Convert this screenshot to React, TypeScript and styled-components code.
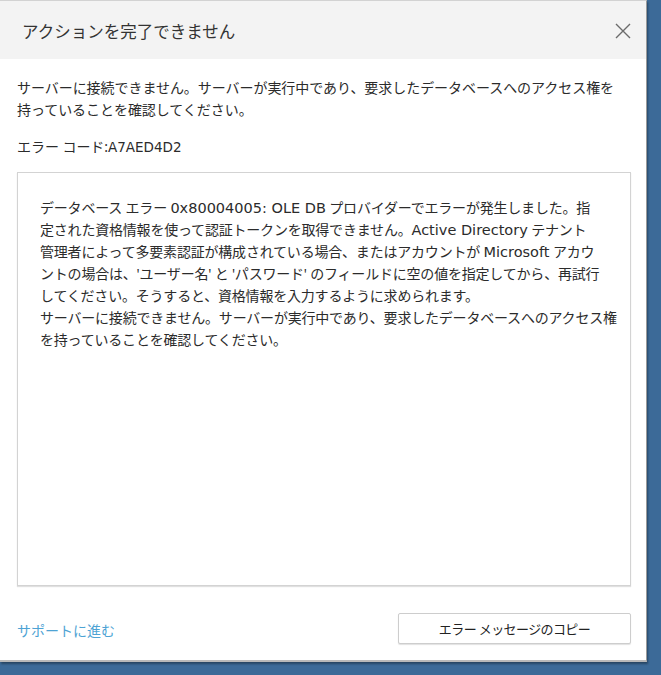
import styled, { createGlobalStyle } from 'styled-components';

// ダイアログの色
const blueBg = '#3c6a98';
const textDark = '#2b2b2b';

const GlobalStyle = createGlobalStyle`
  * { box-sizing: border-box; }
  html, body { margin: 0; padding: 0; }
  body {
    background: ${blueBg};
    font-family: "Noto Sans", "Noto Sans CJK JP", sans-serif;
    width: 661px;
    height: 675px;
    overflow: hidden;
  }
`;

const Dialog = styled.div`
  width: 647px;
  height: 662px;
  background: #fff;
  border-top: 1px solid #d2d2d2;
  border-right: 1px solid #9a9a9a;
  border-bottom: 2px solid #b9b9b9;
  box-shadow: 1px 2px 2px rgba(0, 0, 0, 0.35);
  display: flex;
  flex-direction: column;
`;

const Header = styled.header`
  height: 58px;
  background: #f3f3f3;
  display: flex;
  align-items: center;
  justify-content: space-between;
  padding: 0 15px 0 22px;
`;

const Title = styled.h1`
  margin: 0;
  font-size: 16.5px;
  font-weight: 400;
  color: #333;
  margin-top: 2px;
`;

const CloseButton = styled.button`
  width: 16px;
  height: 16px;
  padding: 0;
  border: none;
  background: none;
  display: flex;
  cursor: pointer;
  margin-top: 1px;
`;

const Body = styled.main`
  flex: 1;
  display: flex;
  flex-direction: column;
  padding: 18px 15px 16px 17px;
`;

const Message = styled.p`
  margin: 0;
  font-size: 14px;
  line-height: 22px;
  letter-spacing: -0.05px;
  color: ${textDark};
  white-space: nowrap;
`;

const ErrorCode = styled(Message)`
  margin-top: 15px;
`;

const Line = styled.span`
  display: block;
`;

// 英数字部分は幅の広い欧文フォントで
const Latin = styled.span<{ $size?: number }>`
  font-family: "DejaVu Sans", "Noto Sans", sans-serif;
  font-size: ${(p) => p.$size ?? 14}px;
  letter-spacing: 0;
`;

const DetailBox = styled.div`
  margin-top: 14px;
  height: 414px;
  border: 1px solid #d3d3d3;
  box-shadow: 0 1px 1px rgba(0, 0, 0, 0.12);
  padding: 24px 10px 0 22px;
  font-size: 14px;
  line-height: 22px;
  letter-spacing: -0.2px;
  color: ${textDark};
  white-space: nowrap;
  overflow: hidden;
`;

const Footer = styled.footer`
  margin-top: auto;
  display: flex;
  align-items: center;
  justify-content: space-between;
`;

const SupportLink = styled.a`
  font-size: 14px;
  color: #4ea3d4;
  text-decoration: none;
  cursor: pointer;
  margin-top: 2px;
`;

const CopyButton = styled.button`
  width: 233px;
  height: 31px;
  background: #fff;
  border: 1px solid #cdcdcd;
  border-radius: 2px;
  box-shadow: 0 1px 1px rgba(0, 0, 0, 0.12);
  font-family: "Noto Sans", "Noto Sans CJK JP", sans-serif;
  font-size: 13px;
  letter-spacing: -0.6px;
  color: #222;
  cursor: pointer;
`;

const detailLines = [
  'データベース エラー 0x80004005: OLE DB プロバイダーでエラーが発生しました。指',
  '定された資格情報を使って認証トークンを取得できません。Active Directory テナント',
  '管理者によって多要素認証が構成されている場合、またはアカウントが Microsoft アカウ',
  "ントの場合は、'ユーザー名' と 'パスワード' のフィールドに空の値を指定してから、再試行",
  'してください。そうすると、資格情報を入力するように求められます。',
  'サーバーに接続できません。サーバーが実行中であり、要求したデータベースへのアクセス権',
  'を持っていることを確認してください。',
];

// 文字列を欧文/和文に分けて描画
const mixed = (text: string, size?: number) =>
  text.split(/([A-Za-z0-9][\x20-\x7E]*[A-Za-z0-9:]|[A-Za-z0-9])/).map((part, i) =>
    i % 2 === 1 ? (
      <Latin key={i} $size={size}>
        {part}
      </Latin>
    ) : (
      part
    )
  );

export default function App() {
  return (
    <>
      <GlobalStyle />
      <Dialog>
        <Header>
          <Title>アクションを完了できません</Title>
          <CloseButton aria-label="閉じる">
            <svg width="16" height="16" viewBox="0 0 16 16">
              <path d="M1 1 L15 15 M15 1 L1 15" stroke="#6b6b6b" strokeWidth="1.4" fill="none" />
            </svg>
          </CloseButton>
        </Header>
        <Body>
          <Message>
            <Line>サーバーに接続できません。サーバーが実行中であり、要求したデータベースへのアクセス権を</Line>
            <Line>持っていることを確認してください。</Line>
          </Message>
          <ErrorCode>エラー コード:{mixed('A7AED4D2', 13.5)}</ErrorCode>
          <DetailBox>
            {detailLines.map((l, i) => (
              <Line key={i}>{mixed(l, 14.5)}</Line>
            ))}
          </DetailBox>
          <Footer>
            <SupportLink>サポートに進む</SupportLink>
            <CopyButton>エラー メッセージのコピー</CopyButton>
          </Footer>
        </Body>
      </Dialog>
    </>
  );
}
